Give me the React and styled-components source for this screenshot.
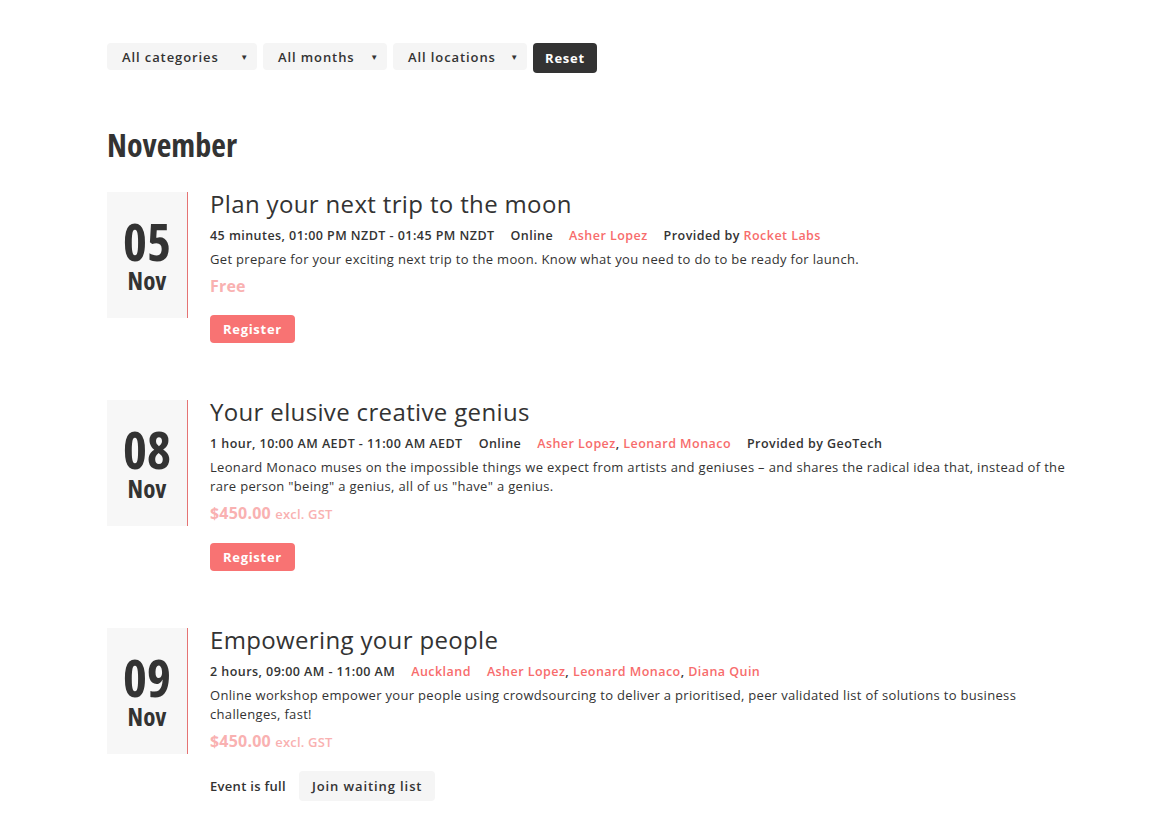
import React from 'react';
import styled, {createGlobalStyle} from 'styled-components';

const GlobalStyle = createGlobalStyle`
  body {
    margin: 0;
    background: #ffffff;
    color: #333333;
    font-family: "Open Sans", "Liberation Sans", sans-serif;
  }
`;

const condensed = `
  font-family: "Open Sans", "DejaVu Sans", sans-serif;
  font-stretch: 75%;
  font-weight: 700;
`;

const Page = styled.main`
  padding: 43px 88px 40px 107px;
`;

const Filters = styled.div`
  display: flex;
  align-items: flex-start;
  gap: 6px;
`;

const Select = styled.div`
  display: flex;
  align-items: center;
  justify-content: space-between;
  width: ${(p) => p.width}px;
  height: 27px;
  box-sizing: border-box;
  padding: 0 8px 0 15px;
  background: #f5f5f5;
  border-radius: 4px;
  font-size: 13px;
  font-weight: 600;
  letter-spacing: 0.9px;
  color: #333333;
`;

const Caret = styled.span`
  font-size: 8px;
`;

const ResetButton = styled.button`
  height: 30px;
  padding: 0 12px;
  border: none;
  border-radius: 4px;
  background: #333333;
  color: #ffffff;
  font-family: "Open Sans", "Liberation Sans", sans-serif;
  font-size: 13px;
  font-weight: 700;
  letter-spacing: 0.8px;
`;

const MonthTitle = styled.h2`
  margin: 50px 0 26px;
  ${condensed}
  font-size: 32px;
  color: #333333;
`;

const EventList = styled.div`
  display: flex;
  flex-direction: column;
  gap: 57px;
`;

const Event = styled.article`
  display: flex;
  align-items: flex-start;
  gap: 22px;
`;

const DateBox = styled.div`
  flex: none;
  width: 81px;
  height: 126px;
  display: flex;
  flex-direction: column;
  align-items: center;
  justify-content: center;
  background: #f7f7f7;
  border-right: 1px solid #e57373;
  ${condensed}
  color: #333333;
  padding-top: 2px;
  box-sizing: border-box;
`;

const Day = styled.div`
  font-size: 51px;
  line-height: 48px;
`;

const Mon = styled.div`
  font-size: 25px;
  line-height: 30px;
`;

const Body = styled.div`
  display: flex;
  flex-direction: column;
  flex: 1;
`;

const Title = styled.h3`
  margin: -3px 0 0;
  font-size: 24px;
  font-weight: 400;
  line-height: 30px;
  letter-spacing: 0.35px;
  color: #333333;
`;

const Meta = styled.div`
  display: flex;
  flex-wrap: wrap;
  gap: 16px;
  margin-top: 8px;
  font-size: 12.5px;
  font-weight: 600;
  line-height: 18px;
  letter-spacing: 0.45px;
`;

const Link = styled.a`
  color: #f76c6c;
  text-decoration: none;
`;

const Desc = styled.p`
  margin: 5px 0 0;
  font-size: 13px;
  line-height: 19px;
  letter-spacing: 0.32px;
`;

const Price = styled.div`
  margin-top: 5px;
  font-size: 16px;
  font-weight: 700;
  color: #f9b1b1;
  line-height: 24px;
  letter-spacing: 0.2px;

  small {
    font-size: 13px;
    font-weight: 600;
  }
`;

const Actions = styled.div`
  display: flex;
  align-items: center;
  gap: 13px;
  margin-top: 17px;
  font-size: 13px;
  font-weight: 600;
  letter-spacing: 0.3px;
`;

const Register = styled.button`
  height: 28px;
  padding: 0 13px;
  border: none;
  border-radius: 4px;
  background: #f87373;
  color: #ffffff;
  font-family: "Open Sans", "Liberation Sans", sans-serif;
  font-size: 13px;
  font-weight: 700;
  letter-spacing: 0.7px;
`;

const WaitButton = styled.button`
  height: 30px;
  padding: 0 13px;
  border: none;
  border-radius: 4px;
  background: #f5f5f5;
  color: #333333;
  font-family: "Open Sans", "Liberation Sans", sans-serif;
  font-size: 13px;
  font-weight: 600;
  letter-spacing: 0.9px;
`;

const People = ({names}) =>
  names.map((n, i) => (
    <React.Fragment key={n}>
      <Link href="#">{n}</Link>
      {i < names.length - 1 && ', '}
    </React.Fragment>
  ));

const events = [
  {
    day: '05',
    title: 'Plan your next trip to the moon',
    time: '45 minutes, 01:00 PM NZDT - 01:45 PM NZDT',
    place: 'Online',
    people: ['Asher Lopez'],
    provider: {name: 'Rocket Labs', link: true},
    desc: 'Get prepare for your exciting next trip to the moon. Know what you need to do to be ready for launch.',
    price: null,
  },
  {
    day: '08',
    title: 'Your elusive creative genius',
    time: '1 hour, 10:00 AM AEDT - 11:00 AM AEDT',
    place: 'Online',
    people: ['Asher Lopez', 'Leonard Monaco'],
    provider: {name: 'GeoTech', link: false},
    desc: 'Leonard Monaco muses on the impossible things we expect from artists and geniuses – and shares the radical idea that, instead of the rare person "being" a genius, all of us "have" a genius.',
    price: '$450.00',
  },
  {
    day: '09',
    title: 'Empowering your people',
    time: '2 hours, 09:00 AM - 11:00 AM',
    place: 'Auckland',
    placeLink: true,
    people: ['Asher Lopez', 'Leonard Monaco', 'Diana Quin'],
    desc: 'Online workshop empower your people using crowdsourcing to deliver a prioritised, peer validated list of solutions to business challenges, fast!',
    price: '$450.00',
    full: true,
  },
];

export default function App() {
  return (
    <Page>
      <GlobalStyle />
      <Filters>
        <Select width={150}>All categories <Caret>▼</Caret></Select>
        <Select width={124}>All months <Caret>▼</Caret></Select>
        <Select width={134}>All locations <Caret>▼</Caret></Select>
        <ResetButton>Reset</ResetButton>
      </Filters>

      <MonthTitle>November</MonthTitle>

      <EventList>
        {events.map((e) => (
          <Event key={e.day}>
            <DateBox>
              <Day>{e.day}</Day>
              <Mon>Nov</Mon>
            </DateBox>
            <Body>
              <Title>{e.title}</Title>
              <Meta>
                <span>{e.time}</span>
                {e.placeLink ? <Link href="#">{e.place}</Link> : <span>{e.place}</span>}
                <span><People names={e.people} /></span>
                {e.provider && (
                  <span>
                    Provided by{' '}
                    {e.provider.link ? <Link href="#">{e.provider.name}</Link> : e.provider.name}
                  </span>
                )}
              </Meta>
              <Desc>{e.desc}</Desc>
              <Price>
                {e.price ? (
                  <>
                    {e.price} <small>excl. GST</small>
                  </>
                ) : (
                  'Free'
                )}
              </Price>
              <Actions>
                {e.full ? (
                  <>
                    <span>Event is full</span>
                    <WaitButton>Join waiting list</WaitButton>
                  </>
                ) : (
                  <Register>Register</Register>
                )}
              </Actions>
            </Body>
          </Event>
        ))}
      </EventList>
    </Page>
  );
}
